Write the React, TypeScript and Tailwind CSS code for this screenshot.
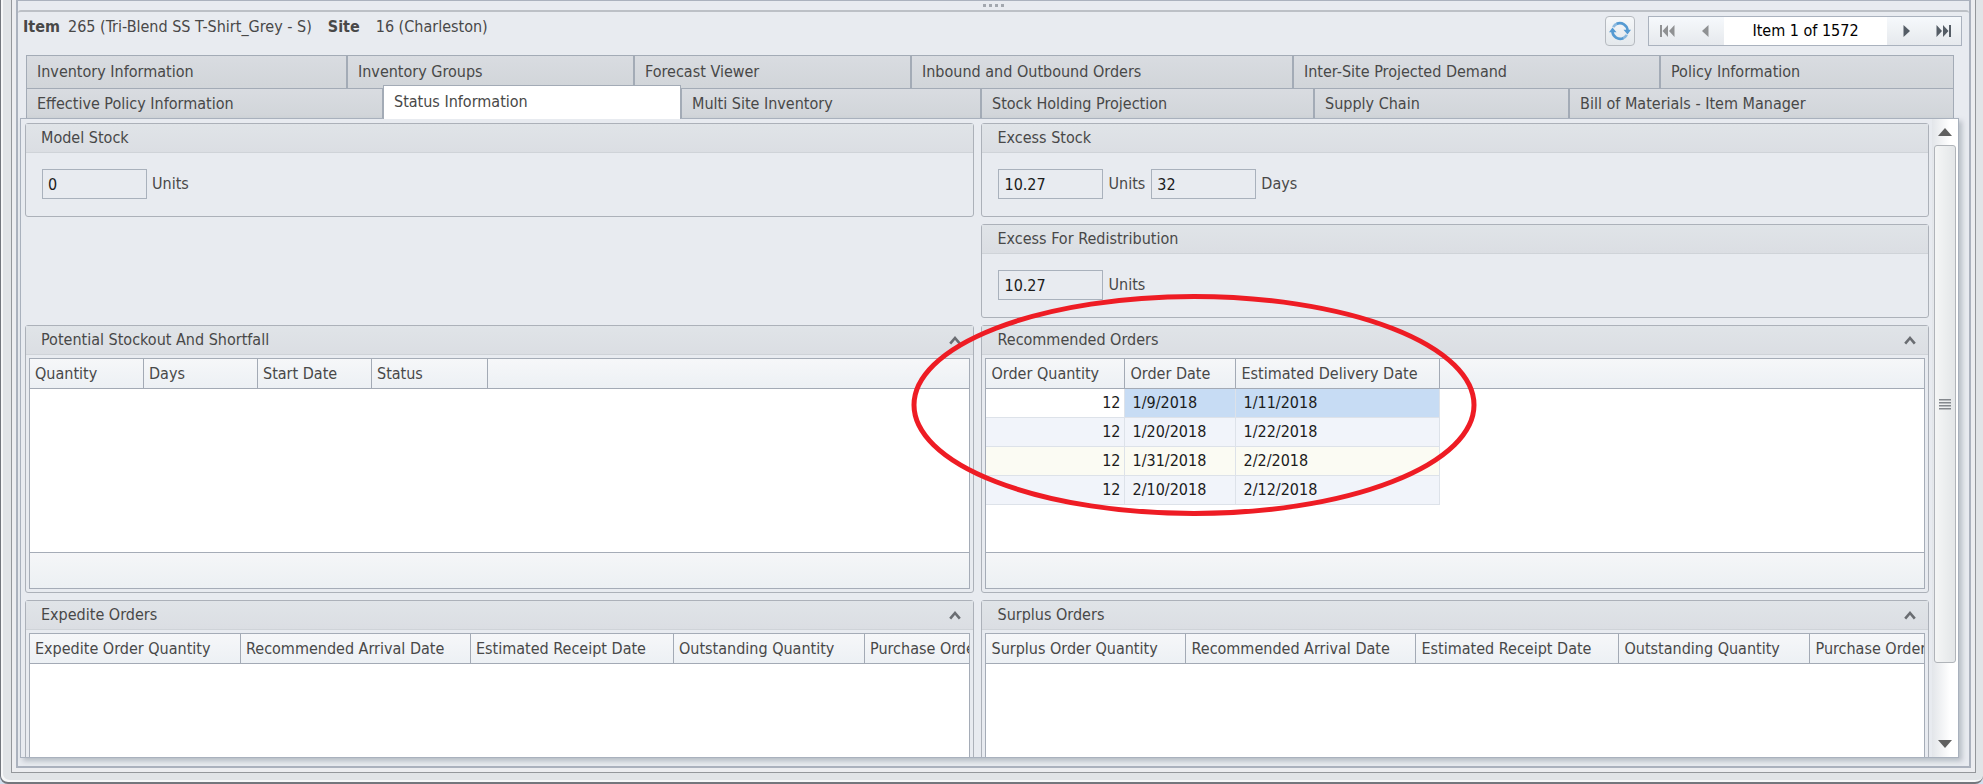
import type { ReactNode } from "react";

type Tab = { label: string; active?: boolean };

const topTabs: Tab[] = [
  { label: "Inventory Information" },
  { label: "Inventory Groups" },
  { label: "Forecast Viewer" },
  { label: "Inbound and Outbound Orders" },
  { label: "Inter-Site Projected Demand" },
  { label: "Policy Information" },
];

const bottomTabs: Tab[] = [
  { label: "Effective Policy Information" },
  { label: "Status Information", active: true },
  { label: "Multi Site Inventory" },
  { label: "Stock Holding Projection" },
  { label: "Supply Chain" },
  { label: "Bill of Materials - Item Manager" },
];

const recommendedOrders = [
  ["12", "1/9/2018", "1/11/2018"],
  ["12", "1/20/2018", "1/22/2018"],
  ["12", "1/31/2018", "2/2/2018"],
  ["12", "2/10/2018", "2/12/2018"],
];

const rowColors = ["bg-[#c7dcf4]", "bg-[#f1f4fa]", "bg-[#fbfbf3]", "bg-[#f1f4fa]"];

function TabButton({ label, active }: Tab) {
  return active ? (
    <button
      role="tab"
      aria-selected="true"
      className="relative z-10 -mt-[3px] -mb-px truncate border border-b-0 border-[#a3abb6] bg-white pb-0.5 pl-[10px] text-left"
    >
      {label}
    </button>
  ) : (
    <button
      role="tab"
      aria-selected="false"
      className="truncate border border-b-0 border-[#a3abb6] bg-linear-to-b from-[#d9dce1] to-[#d1d5d9] pl-[10px] text-left"
    >
      {label}
    </button>
  );
}

function Group({
  title,
  collapsible,
  children,
}: {
  title: string;
  collapsible?: boolean;
  children: ReactNode;
}) {
  return (
    <section className="relative min-w-0 rounded-[3px] border border-[#acb1b9] bg-[#e8ebf0]">
      <header className="flex h-[29px] items-center justify-between border-b border-[#cfd3d8] bg-linear-to-b from-[#e0e4e8] to-[#dbdee3] pr-3 pl-[15px]">
        <h2>{title}</h2>
        {collapsible && (
          <button aria-label={`Collapse ${title}`} className="text-[#6a6d72]">
            <svg width="12" height="10" viewBox="0 0 12 10" fill="none" stroke="currentColor" strokeWidth="2.6">
              <path d="M1.2 8.6 6 3l4.8 5.6" />
            </svg>
          </button>
        )}
      </header>
      {children}
    </section>
  );
}

function ValueField({ value, unit }: { value: string; unit: string }) {
  return (
    <label className="flex items-center gap-[5px]">
      <input
        readOnly
        defaultValue={value}
        className="h-[30px] w-[105px] border border-[#a9b1bc] bg-[#e8ebf0] px-[5px] text-[#1c1c1c] outline-none"
      />
      {unit}
    </label>
  );
}

function DataGrid({
  columns,
  widths,
  rows = [],
  footer,
}: {
  columns: string[];
  widths: number[];
  rows?: string[][];
  footer?: boolean;
}) {
  const filler = widths.length === columns.length;
  return (
    <div className="m-[3px] overflow-hidden border border-[#a5acb7] bg-white">
      <div className="h-[193px] overflow-hidden">
        <table className="w-full table-fixed border-separate border-spacing-0">
          <colgroup>
            {widths.map((width, i) => (
              <col key={i} style={{ width }} />
            ))}
            <col />
          </colgroup>
          <thead>
            <tr className="h-[30px] bg-linear-to-b from-[#f6f7f9] to-[#ecf0f4]">
              {columns.map((column, i) => (
                <th
                  key={column}
                  className={`overflow-hidden border-b border-[#a3aab5] p-0 pl-[5px] text-left font-normal whitespace-nowrap ${
                    i < widths.length ? "border-r" : ""
                  }`}
                >
                  {column}
                </th>
              ))}
              {filler && <td className="border-b border-[#a3aab5] p-0" />}
            </tr>
          </thead>
          <tbody className="text-[#1c1c1c]">
            {rows.map((row, r) => (
              <tr key={r} className="h-[29px]">
                {row.map((cell, c) => (
                  <td
                    key={c}
                    className={`border-r border-b border-[#dde2e9] p-0 ${
                      c === 0 ? "pr-1 text-right" : "pl-[7px]"
                    } ${r === 0 && c === 0 ? "bg-white" : rowColors[r]}`}
                  >
                    {cell}
                  </td>
                ))}
              </tr>
            ))}
          </tbody>
        </table>
      </div>
      {footer && (
        <div className="h-[36px] border-t border-[#a5acb7] bg-linear-to-b from-[#f5f6f8] to-[#ecf0f3]" />
      )}
    </div>
  );
}

function Pager() {
  return (
    <nav
      aria-label="Item navigation"
      className="flex h-[30px] items-stretch border border-[#aab2be] bg-linear-to-b from-[#f6f9fc] to-[#e6e9ed] text-black"
    >
      <button aria-label="First item" className="flex w-[37px] items-center justify-center text-[#8f9193]">
        <svg width="15" height="12" viewBox="0 0 15 12" fill="currentColor">
          <path d="M0 0h2v12H0zM8 0v12L2.500 6zM14.500 0v12L9 6z" />
        </svg>
      </button>
      <button aria-label="Previous item" className="flex w-[38px] items-center justify-center text-[#8f9193]">
        <svg width="7" height="12" viewBox="0 0 7 12" fill="currentColor">
          <path d="M6.500 0v12L0 6z" />
        </svg>
      </button>
      <span className="flex w-[163px] items-center justify-center bg-white">Item 1 of 1572</span>
      <button aria-label="Next item" className="flex w-[38px] items-center justify-center text-[#555d66]">
        <svg width="7" height="12" viewBox="0 0 7 12" fill="currentColor">
          <path d="M.5 0v12L7 6z" />
        </svg>
      </button>
      <button aria-label="Last item" className="flex w-[36px] items-center justify-center text-[#555d66]">
        <svg width="15" height="12" viewBox="0 0 15 12" fill="currentColor">
          <path d="M13 0h2v12h-2zM.5 0v12L6 6zM7 0v12l5.500-6z" />
        </svg>
      </button>
    </nav>
  );
}

function ScrollBar() {
  return (
    <div className="flex w-[26px] shrink-0 flex-col bg-linear-to-r from-[#e3e6ea] to-white to-70%">
      <button aria-label="Scroll up" className="flex h-[26px] items-center justify-center text-[#606060]">
        <svg width="14" height="8" viewBox="0 0 14 8" fill="currentColor">
          <path d="M7 0 14 8H0z" />
        </svg>
      </button>
      <div className="mx-0.5 flex grow-[518] basis-0 flex-col items-center justify-center rounded-[3px] border border-[#b0b4b9] bg-linear-to-r from-[#f5f6f6] to-[#e3e6e8]">
        <svg width="12" height="11" viewBox="0 0 12 11" fill="#84888d">
          <path d="M0 0h12v1.400H0zM0 3h12v1.400H0zM0 6h12v1.400H0zM0 9h12v1.400H0z" />
        </svg>
      </div>
      <div className="grow-[68] basis-0" />
      <button aria-label="Scroll down" className="flex h-[26px] items-center justify-center text-[#606060]">
        <svg width="14" height="8" viewBox="0 0 14 8" fill="currentColor">
          <path d="M7 8 0 0h14z" />
        </svg>
      </button>
    </div>
  );
}

export default function App() {
  return (
    <div className="h-screen bg-[#d3dfee] font-['DejaVu_Sans_Condensed','DejaVu_Sans',sans-serif] text-[16px] leading-[20px] text-[#484848]">
      <div className="flex h-full rounded-b-[8px] border-b-2 border-l border-b-[#73767c] border-l-[#73777e] bg-[#e1e4e7] pr-[7px] pb-[9px] pl-[10px] shadow-[inset_2px_-2px_0_#f6f7f8]">
        <div className="flex min-w-0 grow border border-t-0 border-[#94979b] bg-[#ecedf0] px-1 pb-1">
          <div className="flex min-w-0 grow flex-col border-2 border-t border-[#abb2be] bg-[#e8ebf0]">
            <div className="flex h-[9px] shrink-0 items-center justify-center gap-[3px]">
              <i className="size-[3px] bg-[#a3a8af]" />
              <i className="size-[3px] bg-[#a3a8af]" />
              <i className="size-[3px] bg-[#a3a8af]" />
              <i className="size-[3px] bg-[#a3a8af]" />
            </div>

            <header className="flex h-[45px] shrink-0 items-start justify-between rounded-t-[3px] border-t-2 border-[#bcc0c6] pt-1 pr-[7px] pl-[5px]">
              <h1 className="flex h-[22px] items-center">
                <b>Item</b>
                <span className="pl-2">265 (Tri-Blend SS T-Shirt_Grey - S)</span>
                <b className="pl-4">Site</b>
                <span className="pl-4">16 (Charleston)</span>
              </h1>
              <div className="flex gap-[13px]">
                <button
                  aria-label="Refresh"
                  className="flex h-[30px] w-[30px] items-center justify-center rounded-[4px] border border-[#b6bac0] bg-linear-to-b from-[#f5f7f9] to-[#e4e8ec]"
                >
                  <svg width="22" height="20" viewBox="0 0 22 20" fill="none">
                    <g stroke="#559ad2" strokeWidth="2.600">
                      <path d="M4.200 6.200A7.800 7.800 0 0 1 8.600 2.600" opacity=".65" />
                      <path d="M7.800 2.800A7.800 7.800 0 0 1 18.600 9.500" />
                      <path d="M17.800 13.800A7.800 7.800 0 0 1 13.400 17.400" opacity=".65" />
                      <path d="M14.200 17.200A7.800 7.800 0 0 1 3.400 10.500" />
                    </g>
                    <path d="M14.500 8.800H22l-3.500 4.600zM7.500 11.200H0l3.500-4.600z" fill="#559ad2" />
                  </svg>
                </button>
                <Pager />
              </div>
            </header>

            <div role="tablist" className="mr-[15px] ml-2 shrink-0">
              <div className="grid h-[33px] grid-cols-[321fr_287fr_277fr_382fr_367fr_294fr]">
                {topTabs.map((tab) => (
                  <TabButton key={tab.label} {...tab} />
                ))}
              </div>
              <div className="grid h-[30px] grid-cols-[357fr_298fr_300fr_333fr_255fr_385fr]">
                {bottomTabs.map((tab) => (
                  <TabButton key={tab.label} {...tab} />
                ))}
              </div>
            </div>

            <main className="mr-[10px] mb-2 ml-0.5 flex min-h-0 grow basis-0 gap-[3px] border border-[#a9b1bd] shadow-[3px_3px_5px_rgba(90,100,115,0.35)]">
              <div className="grid min-w-0 grow basis-0 grid-cols-[950fr_948fr] grid-rows-[94px_94px_268px_234px] gap-x-[7px] gap-y-[7px] overflow-hidden pt-1 pl-1">
                <Group title="Model Stock">
                  <div className="flex px-4 pt-4">
                    <ValueField value="0" unit="Units" />
                  </div>
                </Group>
                <Group title="Excess Stock">
                  <div className="flex gap-[6px] px-4 pt-4">
                    <ValueField value="10.27" unit="Units" />
                    <ValueField value="32" unit="Days" />
                  </div>
                </Group>
                <div className="col-start-2 grid">
                  <Group title="Excess For Redistribution">
                    <div className="flex px-4 pt-4">
                      <ValueField value="10.27" unit="Units" />
                    </div>
                  </Group>
                </div>
                <Group title="Potential Stockout And Shortfall" collapsible>
                  <DataGrid
                    columns={["Quantity", "Days", "Start Date", "Status"]}
                    widths={[114, 114, 114, 116]}
                    footer
                  />
                </Group>
                <Group title="Recommended Orders" collapsible>
                  <DataGrid
                    columns={["Order Quantity", "Order Date", "Estimated Delivery Date"]}
                    widths={[139, 111, 204]}
                    rows={recommendedOrders}
                    footer
                  />
                  <svg
                    className="pointer-events-none absolute -top-[33px] -left-[72px] z-20"
                    width="568"
                    height="224"
                    viewBox="0 0 568 224"
                    fill="none"
                  >
                    <ellipse cx="284" cy="112" rx="280" ry="108.500" stroke="#ee1c24" strokeWidth="5" />
                  </svg>
                </Group>
                <Group title="Expedite Orders" collapsible>
                  <DataGrid
                    columns={[
                      "Expedite Order Quantity",
                      "Recommended Arrival Date",
                      "Estimated Receipt Date",
                      "Outstanding Quantity",
                      "Purchase Order",
                    ]}
                    widths={[211, 230, 203, 191]}
                  />
                </Group>
                <Group title="Surplus Orders" collapsible>
                  <DataGrid
                    columns={[
                      "Surplus Order Quantity",
                      "Recommended Arrival Date",
                      "Estimated Receipt Date",
                      "Outstanding Quantity",
                      "Purchase Order",
                    ]}
                    widths={[200, 230, 203, 191]}
                  />
                </Group>
              </div>
              <ScrollBar />
            </main>
          </div>
        </div>
      </div>
    </div>
  );
}
